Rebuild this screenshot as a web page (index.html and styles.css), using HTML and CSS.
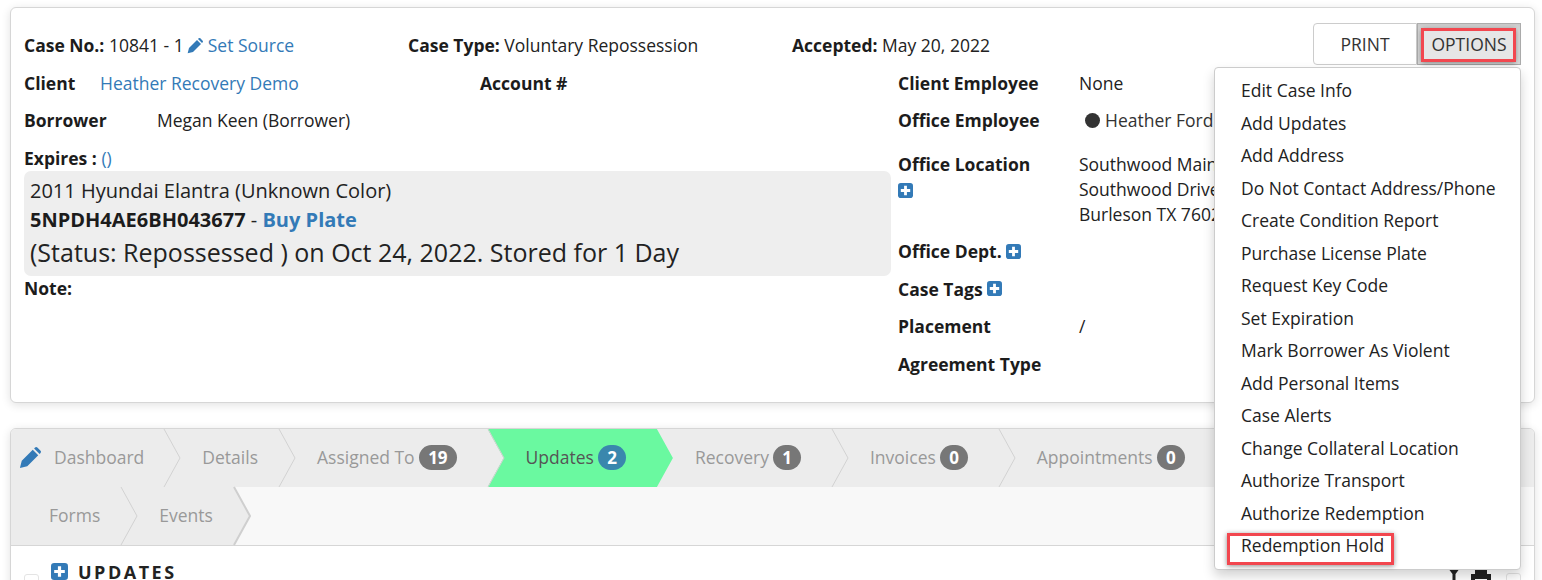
FILE: index.html
```html
<!DOCTYPE html>
<html lang="en">
<head>
<meta charset="utf-8">
<title>Case 10841</title>
<link rel="stylesheet" href="styles.css">
</head>
<body>
<section class="card case">
  <header class="case-head">
    <div class="head-col"><b>Case No.:</b> 10841 - 1 <svg class="pencil-sm" viewBox="0 0 24 24"><path d="M1 23l2-8L15 3l6 6L9 21zM16.500 1.500l1-1a2 2 0 0 1 2.500 0l3.500 3.500a2 2 0 0 1 0 2.500l-1 1z"/></svg> <a href="#">Set Source</a></div>
    <div class="head-col"><b>Case Type:</b> Voluntary Repossession</div>
    <div class="head-col"><b>Accepted:</b> May 20, 2022</div>
    <div class="btn-group">
      <button class="btn">PRINT</button>
      <button class="btn btn-open">OPTIONS<span class="mark mark-options"></span></button>
    </div>
  </header>
  <div class="case-body">
    <div class="left-col">
      <div class="row row-client"><b class="lbl-client">Client</b><a href="#" class="client-link">Heather Recovery Demo</a><b>Account #</b></div>
      <div class="row row-borrower"><b class="lbl-borrower">Borrower</b><span>Megan Keen (Borrower)</span></div>
      <div class="row-expires"><b>Expires :</b> <a href="#">()</a></div>
      <div class="vehicle">
        <div class="v1">2011 Hyundai Elantra (Unknown Color)</div>
        <div class="v2"><b>5NPDH4AE6BH043677</b> - <a href="#"><b>Buy Plate</b></a></div>
        <div class="v3">(Status: Repossessed ) on Oct 24, 2022. Stored for 1 Day</div>
      </div>
      <div class="row-note"><b>Note:</b></div>
    </div>
    <div class="right-col">
      <div class="rrow r-client"><b class="rlbl">Client Employee</b><span>None</span></div>
      <div class="rrow r-office"><b class="rlbl">Office Employee</b><span class="emp"><i class="dot"></i>Heather Ford</span></div>
      <div class="rrow r-loc">
        <div class="rlbl"><b>Office Location</b><br><svg class="plus" viewBox="0 0 16 16"><rect width="16" height="16" rx="3"/><path class="plus-x" d="M6.500 3h3v3.500H13v3H9.500V13h-3V9.500H3v-3h3.500z"/></svg></div>
        <div>Southwood Main<br>Southwood Drive<br>Burleson TX 76028</div>
      </div>
      <div class="rrow r-dept"><b>Office Dept.</b> <svg class="plus" viewBox="0 0 16 16"><rect width="16" height="16" rx="3"/><path class="plus-x" d="M6.500 3h3v3.500H13v3H9.500V13h-3V9.500H3v-3h3.500z"/></svg></div>
      <div class="rrow r-tags"><b>Case Tags</b> <svg class="plus" viewBox="0 0 16 16"><rect width="16" height="16" rx="3"/><path class="plus-x" d="M6.500 3h3v3.500H13v3H9.500V13h-3V9.500H3v-3h3.500z"/></svg></div>
      <div class="rrow r-place"><b class="rlbl">Placement</b><span>/</span></div>
      <div class="rrow r-agree"><b class="rlbl">Agreement Type</b></div>
    </div>
  </div>
</section>

<nav class="menu">
  <a href="#">Edit Case Info</a>
  <a href="#">Add Updates</a>
  <a href="#">Add Address</a>
  <a href="#">Do Not Contact Address/Phone</a>
  <a href="#">Create Condition Report</a>
  <a href="#">Purchase License Plate</a>
  <a href="#">Request Key Code</a>
  <a href="#">Set Expiration</a>
  <a href="#">Mark Borrower As Violent</a>
  <a href="#">Add Personal Items</a>
  <a href="#">Case Alerts</a>
  <a href="#">Change Collateral Location</a>
  <a href="#">Authorize Transport</a>
  <a href="#">Authorize Redemption</a>
  <a href="#" class="hold">Redemption Hold</a>
</nav>

<section class="card work">
  <div class="tabs tabs-one">
    <div class="tab tab-dash"><svg class="pencil" viewBox="0 0 24 24"><path d="M1 23l2-8L15 3l6 6L9 21zM16.500 1.500l1-1a2 2 0 0 1 2.500 0l3.500 3.500a2 2 0 0 1 0 2.500l-1 1z"/></svg><span>Dashboard</span><svg class="chev" viewBox="0 0 16 58"><path d="M0 0L16 29L0 58"/></svg></div>
    <div class="tab"><span>Details</span><svg class="chev" viewBox="0 0 16 58"><path d="M0 0L16 29L0 58"/></svg></div>
    <div class="tab"><span>Assigned To</span><i class="badge badge-wide">19</i><svg class="chev" viewBox="0 0 16 58"><path d="M0 0L16 29L0 58"/></svg></div>
    <div class="tab active"><span>Updates</span><i class="badge">2</i></div>
    <div class="tab"><span>Recovery</span><i class="badge">1</i><svg class="chev" viewBox="0 0 16 58"><path d="M0 0L16 29L0 58"/></svg></div>
    <div class="tab"><span>Invoices</span><i class="badge">0</i><svg class="chev" viewBox="0 0 16 58"><path d="M0 0L16 29L0 58"/></svg></div>
    <div class="tab"><span>Appointments</span><i class="badge">0</i></div>
  </div>
  <div class="tabs tabs-two">
    <div class="tab"><span>Forms</span><svg class="chev" viewBox="0 0 16 58"><path d="M0 0L16 29L0 58"/></svg></div>
    <div class="tab"><span>Events</span><svg class="chev chev-end" viewBox="0 0 16 58"><path d="M0 0L16 29L0 58"/></svg></div>
  </div>
  <div class="updates">
    <span class="check"></span>
    <svg class="plus plus-lg" viewBox="0 0 16 16"><rect width="16" height="16" rx="3"/><path class="plus-x" d="M6.500 3h3v3.500H13v3H9.500V13h-3V9.500H3v-3h3.500z"/></svg>
    <h2>UPDATES</h2>
    <div class="tools">
      <svg class="tool tool-filter" viewBox="0 0 12 18"><path d="M0 0h12L7.500 6v12l-3-3V6z"/></svg>
      <svg class="tool tool-print" viewBox="0 0 20 18"><path d="M4 0h12v6H4zM0 6h20v8h-4v-3H4v3H0zM4 12h12v6H4z"/></svg>
      <span class="check"></span>
    </div>
  </div>
</section>
</body>
</html>
```
FILE: styles.css
```css
* { box-sizing: border-box; }
html, body { margin: 0; height: 100%; overflow: hidden; background: #fff; }
body {
  position: relative;
  padding: 7px 7px 0 10px;
  font-family: "Open Sans", "Liberation Sans", sans-serif;
  font-size: 17.500px;
  line-height: 22.500px;
  color: #222;
}
a { color: #337ab7; text-decoration: none; }
b { font-weight: 700; color: #1c1c1c; }
a b { color: inherit; }

.card {
  background: #fff;
  border: 1px solid #d6d6d6;
  border-radius: 6px;
  box-shadow: 0 2px 10px rgba(0, 0, 0, .12);
}
.case { height: 396px; padding: 15px 13px 0; }
.case-head { display: flex; align-items: center; height: 42px; }
.head-col { width: 384px; flex: none; padding-top: 2px; white-space: nowrap; }
.pencil-sm { width: 16px; height: 16px; margin-left: -1px; fill: #337ab7; vertical-align: -2px; }
.btn-group { display: flex; margin-left: auto; }
.btn {
  position: relative;
  width: 104px;
  height: 42px;
  padding: 0;
  font: inherit;
  color: #333;
  background: #fff;
  border: 1px solid #ccc;
  border-radius: 4px 0 0 4px;
}
.btn-open {
  background: #e6e6e6;
  border-color: #adadad;
  border-radius: 0;
  box-shadow: inset 0 3px 5px rgba(0, 0, 0, .125);
}
.mark {
  position: absolute;
  border: 3px solid #f2474f;
  box-shadow: 0 1px 5px rgba(0, 0, 0, .45);
  pointer-events: none;
}
.mark-options { left: 3px; top: 4px; width: 95px; height: 34px; }

.case-body { display: flex; margin-top: 7px; }
.left-col { width: 874px; flex: none; }
.right-col { flex: 1; }
.row { display: flex; }
.row-borrower { margin-top: 14.500px; }
.lbl-client { width: 76px; }
.client-link { width: 380px; }
.lbl-borrower { width: 133px; }
.row-expires { margin-top: 15.500px; height: 23px; }
.vehicle {
  width: 867px;
  height: 105px;
  margin-top: 1px;
  padding: 6px 6px 0;
  background: #eee;
  border-radius: 7px;
}
.v1 { font-size: 20px; line-height: 28px; }
.v2 { font-size: 20px; line-height: 30px; }
.v3 { font-size: 25px; line-height: 34px; }
.row-note { margin-top: 1px; }

.rrow { display: flex; }
.rlbl { width: 181px; flex: none; }
.r-office { margin-top: 14.500px; }
.r-loc { margin-top: 20.500px; line-height: 25px; }
.r-dept { margin-top: 13px; align-items: center; gap: 4px; }
.r-tags { margin-top: 15px; align-items: center; gap: 4px; }
.r-place { margin-top: 15px; }
.r-agree { margin-top: 15px; }
.emp { display: flex; align-items: center; margin-left: 6px; color: #333; }
.dot { width: 15px; height: 15px; margin-right: 5px; border-radius: 50%; background: #333; }
.plus { display: inline-block; width: 15px; height: 15px; fill: #337ab7; vertical-align: -2px; }
.plus-x { fill: #fff; }

.menu {
  position: absolute;
  left: 1214px;
  top: 67px;
  width: 307px;
  height: 503px;
  padding: 6px 0 0 26px;
  display: flex;
  flex-direction: column;
  background: #fff;
  border: 1px solid #ccc;
  border-radius: 4px;
  box-shadow: 0 6px 12px rgba(0, 0, 0, .175);
  z-index: 5;
}
.menu a { position: relative; display: block; height: 32.500px; line-height: 32.500px; color: #222; }
.hold::after {
  content: "";
  box-sizing: border-box;
  position: absolute;
  left: -14px;
  top: 4px;
  width: 167px;
  height: 32px;
  border: 3px solid #f2474f;
  box-shadow: 0 1px 5px rgba(0, 0, 0, .45);
}

.work { margin-top: 25px; height: 300px; background: #fff; overflow: hidden; }
.tabs { display: flex; height: 58px; color: #999; }
.tabs-one { background: #ececec; }
.tabs-two { background: #f8f8f8; border-bottom: 1px solid #d6d6d6; height: 59px; }
.tabs-two .tab { background: #ececec; }
.tab { position: relative; display: flex; align-items: center; padding: 0 21px 0 38px; flex: none; }
.tab > span { position: relative; z-index: 2; top: -1px; }
.tab-dash { padding: 0 20px 0 8px; }
.pencil { width: 22px; height: 22px; margin-right: 13px; fill: #337ab7; }
.chev { position: absolute; left: 100%; top: 0; width: 16px; height: 58px; z-index: 3; fill: none; stroke: #d2d2d2; stroke-width: 1; overflow: visible; }
.chev-end { fill: #ececec; stroke: #cfcfcf; stroke-width: 2; }
.badge {
  position: relative;
  z-index: 2;
  top: -.500px;
  min-width: 27.500px;
  height: 25px;
  margin: 0 10px 0 4.500px;
  padding: 0 8px;
  border-radius: 12.500px;
  background: #777;
  color: #fff;
  font-style: normal;
  font-weight: 700;
  font-size: 17px;
  line-height: 25px;
  text-align: center;
}
.badge-wide { padding: 0 9px; }
.active { color: #555; }
.active::before {
  content: "";
  position: absolute;
  top: 0;
  bottom: 0;
  left: 0;
  right: -16px;
  background: #6af9a0;
  clip-path: polygon(0 0, calc(100% - 16px) 0, 100% 50%, calc(100% - 16px) 100%, 0 100%, 16px 50%);
}
.active .badge { background: #3a87ad; }

.updates { display: flex; align-items: flex-start; padding: 17px 13px 0 13px; }
.updates .check { margin-top: 11px; }
.check { display: block; width: 15px; height: 20px; border: 1px solid #e4e4e4; border-radius: 3px; }
.plus-lg { width: 17px; height: 17px; margin-left: 12px; margin-top: 0; }
.updates h2 { margin: -3px 0 0 10px; font-size: 18px; line-height: 24px; font-weight: 700; letter-spacing: 2.500px; color: #222; }
.tools { display: flex; gap: 11px; margin-left: auto; }
.tool { fill: #222; margin-top: 5px; }
.tool-filter { width: 12px; height: 18px; }
.tool-print { width: 20px; height: 18px; }
.tools .check { margin-left: 4px; margin-top: 10px; }
```
